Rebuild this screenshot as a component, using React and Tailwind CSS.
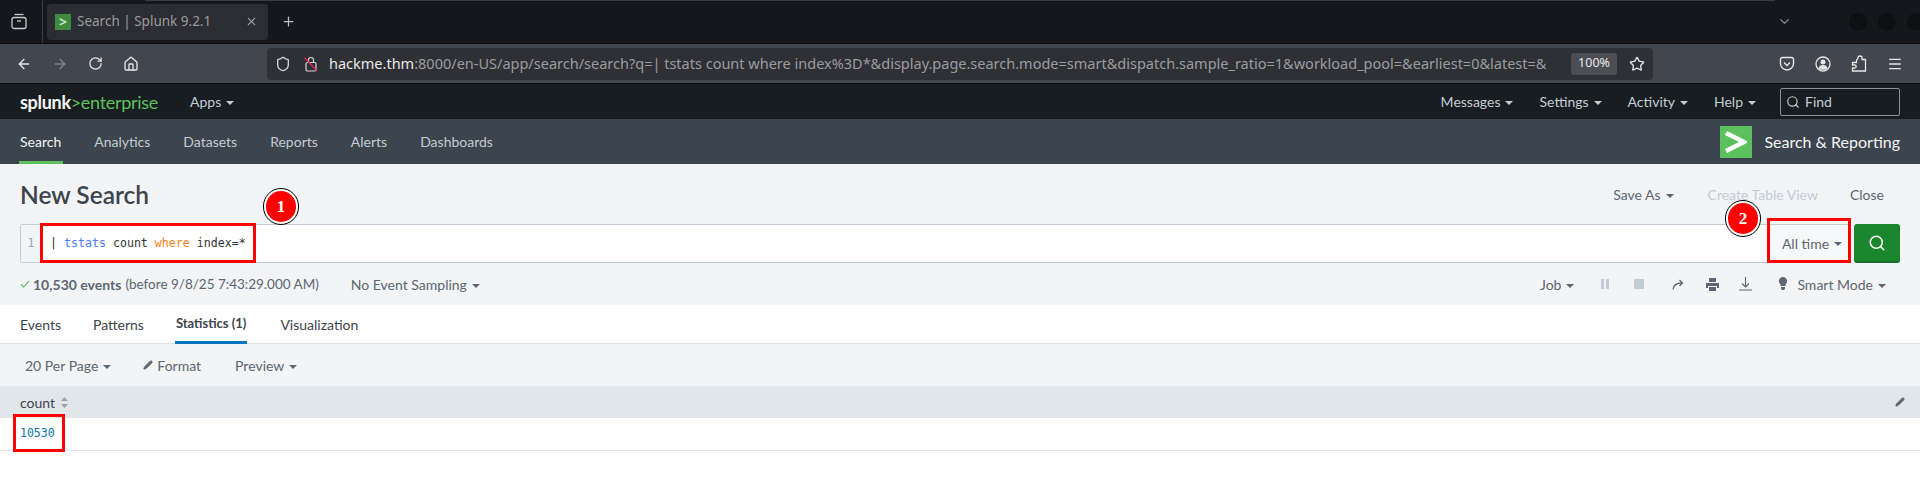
import React from "react";
import { ChevronDown, Pencil, Search, X, Plus, ArrowLeft, ArrowRight, RotateCw, House, Shield, Star, Menu } from "lucide-react";

const ui = "font-['Lato','Liberation_Sans',sans-serif]";
const chrome = "font-['Noto_Sans','Liberation_Sans',sans-serif]";
const mono = "font-['DejaVu_Sans_Mono',monospace]";

const Caret = () => (
  <span className="inline-block ml-[5px] w-0 h-0 border-x-[4px] border-x-transparent border-t-[4px] border-t-current align-middle" />
);

const NavItem = ({ label, active }) => (
  <div className={`h-full flex items-center relative ${active ? "text-[#f2f4f5]" : "text-[#c3cbd4]"}`}>
    {label}
    {active && <div className="absolute bottom-0 -left-[1px] -right-[2px] h-[3px] bg-[#5cc05c]" />}
  </div>
);

const TabBar = () => (
  <div className={`h-[44px] bg-[#15171c] flex items-center relative border-b border-[#0c0d10] ${chrome}`}>
    <div className="absolute top-0 left-[145px] w-[1630px] h-[1px] bg-[#3a3c41]" />
    <div className="w-[43px] h-full flex items-center justify-center pr-[4px] border-r border-[#3a3c41] shrink-0">
      <svg width="16" height="17" viewBox="0 0 16 17" fill="none" stroke="#c9cacc" strokeWidth="1.3">
        <path d="M3.500 1.500h9" />
        <rect x="1" y="4.500" width="14" height="11" rx="2" />
        <path d="M6 8h4" />
      </svg>
    </div>
    <div className="ml-[4px] w-[221px] h-[36px] bg-[#2b2d32] rounded-[4px] flex items-center pl-[8px] pr-[10px] text-[13.500px] text-[#9a9b9e] shrink-0">
      <div className="w-[16px] h-[16px] bg-[#3f8a3f] flex items-center justify-center text-[#c6e4c6] text-[14px] font-bold leading-none mr-[6px]">&gt;</div>
      <span className="flex-1">Search | Splunk 9.2.1</span>
      <X size={13} color="#9a9b9e" />
    </div>
    <Plus size={15} color="#bcbdc0" className="ml-[13px]" />
    <div className="flex-1" />
    <ChevronDown size={15} color="#8f9094" className="mr-[57px]" />
    <div className="flex gap-[11px] -mr-[5px]">
      <div className="w-[18px] h-[18px] rounded-full bg-[#0e0f12]" />
      <div className="w-[18px] h-[18px] rounded-full bg-[#0e0f12]" />
      <div className="w-[18px] h-[18px] rounded-full bg-[#0e0f12]" />
    </div>
  </div>
);

const UrlBar = () => (
  <div className={`h-[40px] bg-[#42464e] flex items-center border-b border-[#0c0d10] ${chrome}`}>
    <div className="w-[267px] flex items-center pl-[16px] gap-[20px] shrink-0">
      <ArrowLeft size={16} color="#e6e6e8" />
      <ArrowRight size={16} color="#83868c" />
      <RotateCw size={15} color="#e6e6e8" />
      <House size={16} color="#e6e6e8" />
    </div>
    <div className="w-[1386px] h-[32px] bg-[#2e3036] rounded-[4px] flex items-center pl-[8px] pr-[8px] text-[14.500px] shrink-0">
      <Shield size={16} color="#d5d5d7" />
      <svg width="14" height="16" viewBox="0 0 14 16" fill="none" stroke="#d5d5d7" strokeWidth="1.200" className="ml-[13px] mr-[11px]">
        <rect x="2" y="6.500" width="10" height="8.500" rx="1.500" />
        <path d="M4.500 6.500V4a2.500 2.500 0 0 1 5 0v2.500" />
        <path d="M0.500 1.500 13 15" stroke="#e22850" />
      </svg>
      <div className="w-[1232px] whitespace-nowrap overflow-hidden text-[#9b9c9f]">
        <span className="text-[#e8e8ea]">hackme.thm</span>:8000/en-US/app/search/search?q=| tstats count where index%3D*&amp;display.page.search.mode=smart&amp;dispatch.sample_ratio=1&amp;workload_pool=&amp;earliest=0&amp;latest=&amp;
      </div>
      <div className="w-[46px] h-[22px] bg-[#4c4e54] rounded-[3px] flex items-center justify-center text-[12.500px] text-[#e8e8ea] ml-[10px] shrink-0">100%</div>
      <Star size={16} color="#e6e6e8" className="ml-[12px]" />
    </div>
    <div className="flex-1 flex items-center justify-end pr-[17px] gap-[20px]">
      <svg width="16" height="16" viewBox="0 0 16 16" fill="none" stroke="#e6e6e8" strokeWidth="1.400">
        <path d="M1.500 3.500C1.500 2.400 2.400 1.500 3.500 1.500h9c1.100 0 2 .9 2 2V7.500a6.500 6.500 0 0 1-13 0z" />
        <path d="M5 6.500 8 9.500l3-3" />
      </svg>
      <svg width="16" height="16" viewBox="0 0 16 16" fill="none" stroke="#e6e6e8" strokeWidth="1.300">
        <circle cx="8" cy="8" r="7" />
        <circle cx="8" cy="6" r="2.500" fill="#e6e6e8" stroke="none" />
        <path d="M3.500 12.500c.5-2.500 2-3.500 4.500-3.500s4 1 4.500 3.500C11 14.300 5 14.300 3.500 12.500z" fill="#e6e6e8" stroke="none" />
      </svg>
      <svg width="16" height="17" viewBox="0 0 16 17" fill="none" stroke="#e6e6e8" strokeWidth="1.300">
        <path d="M1.500 7.500h4V5.500C5.500 4.500 7 3.900 7 2.700 7 1.800 7.800 1 9 1c1.200 0 2 .8 2 1.700v1.800h3.500v11.500H1.500v-3h2c1 0 1.700-.7 1.700-1.500S4.500 10 3.500 10h-2z" />
      </svg>
      <Menu size={16} color="#e6e6e8" />
    </div>
  </div>
);

const SplunkBar = () => (
  <div className={`h-[35px] bg-[#171d21] flex items-center pl-[20px] pr-[20px] text-[14px] text-[#c3cbd4] ${ui}`}>
    <div className="text-[18px] tracking-[-0.3px] leading-none w-[170px] shrink-0">
      <span className="text-[#f5f5f5] font-bold">splunk</span>
      <span className="text-[#5cc05c]">&gt;enterprise</span>
    </div>
    <div>Apps<Caret /></div>
    <div className="flex-1" />
    <div className="flex items-center gap-[26px]">
      <div>Messages<Caret /></div>
      <div>Settings<Caret /></div>
      <div>Activity<Caret /></div>
      <div>Help<Caret /></div>
    </div>
    <div className="ml-[24px] w-[120px] h-[28px] border border-[#8a939c] rounded-[2px] flex items-center pl-[5px] gap-[5px]">
      <Search size={14} color="#c3cbd4" />
      Find
    </div>
  </div>
);

const AppNav = () => (
  <div className={`h-[45px] bg-[#3c444d] flex items-center pl-[20px] pr-[20px] text-[14px] ${ui}`}>
    <div className="h-full flex gap-[33px]">
      <NavItem label="Search" active />
      <NavItem label="Analytics" />
      <NavItem label="Datasets" />
      <NavItem label="Reports" />
      <NavItem label="Alerts" />
      <NavItem label="Dashboards" />
    </div>
    <div className="flex-1" />
    <div className="w-[32px] h-[32px] bg-[#5cc05c] flex items-center justify-center mr-[12px]">
      <svg width="22" height="24" viewBox="0 0 22 24" fill="none" stroke="#ffffff" strokeWidth="4.500">
        <path d="M1 3 19 12 1 21" />
      </svg>
    </div>
    <div className="text-[16px] text-[#f2f4f5]">Search &amp; Reporting</div>
  </div>
);

const SearchPanel = () => (
  <div className={`h-[141px] bg-[#f2f4f5] px-[20px] text-[14px] ${ui}`}>
    <div className="h-[60px] flex items-center">
      <div className="text-[24.500px] font-semibold text-[#3c444d] pt-[2px]">New Search</div>
      <div className="flex-1" />
      <div className="text-[#5c6773]">Save As<Caret /></div>
      <div className="text-[#c3cbd4] ml-[34px]">Create Table View</div>
      <div className="text-[#5c6773] ml-[32px] mr-[16px]">Close</div>
    </div>
    <div className="h-[39px] flex">
      <div className="flex-1 flex border border-[#c3cbd4] border-r-0 rounded-l-[3px] bg-white">
        <div className={`w-[20px] bg-[#f2f4f5] text-[11.500px] text-[#9aa4ae] flex items-center justify-center ${mono}`}>1</div>
        <div className={`pl-[9px] flex items-center text-[11.620px] text-[#333] whitespace-pre ${mono}`}>
          | <span className="text-[#4a7dff]">tstats</span> count <span className="text-[#f58220]">where</span> index=*
        </div>
      </div>
      <div className="w-[81px] bg-[#f7f8fa] border-y border-[#c3cbd4] flex items-center justify-center pl-[3px] text-[#5c6773]">All time<Caret /></div>
      <div className="w-[46px] ml-[3px] bg-[#1a872e] border-b-[2px] border-[#15702a] rounded-[3px] flex items-center justify-center">
        <Search size={18} color="#ffffff" />
      </div>
    </div>
    <div className="h-[42px] flex items-center text-[#5c6773]">
      <svg width="10" height="10" viewBox="0 0 11 10" fill="none" stroke="#5cc05c" strokeWidth="1.200"><path d="M1 5.500 4 8.500 10 1.500" /></svg>
      <span className="font-bold ml-[3px]">10,530 events</span>
      <span className="ml-[4px] text-[13.500px]">(before 9/8/25 7:43:29.000 AM)</span>
      <span className="ml-[32px]">No Event Sampling<Caret /></span>
      <div className="flex-1" />
      <span>Job<Caret /></span>
      <svg width="10" height="10" viewBox="0 0 10 10" fill="#c3cbd4" className="ml-[26px]"><path d="M1 0h3v10H1zM6 0h3v10H6z" /></svg>
      <svg width="10" height="10" viewBox="0 0 10 10" fill="#c3cbd4" className="ml-[24px]"><path d="M0 0h10v10H0z" /></svg>
      <svg width="12" height="11" viewBox="0 0 12 11" fill="none" stroke="#5c6773" strokeWidth="1.300" className="ml-[28px]">
        <path d="M1 10.500C1.500 6 4.500 4 10 4" />
        <path d="M7.500 1 10.500 4 7.500 7" />
      </svg>
      <svg width="13" height="13" viewBox="0 0 13 13" fill="#5c6773" className="ml-[22px]">
        <path d="M3 0h7v4H3zM0 5h13v5h-2V8H2v2H0zM3 9h7v4H3z" />
      </svg>
      <svg width="13" height="14" viewBox="0 0 13 14" fill="none" stroke="#5c6773" strokeWidth="1.100" className="ml-[20px]">
        <path d="M6.500 0v10M3 6.500 6.500 10 10 6.500M0 13h13" />
      </svg>
      <svg width="10" height="14" viewBox="0 0 10 14" fill="#5c6773" className="ml-[26px]">
        <path d="M5 0a4 4 0 0 1 2.500 7.200V9h-5V7.200A4 4 0 0 1 5 0zM3 10h4v1.500L6 13H4l-1-1.500z" />
      </svg>
      <span className="ml-[9px] mr-[14px]">Smart Mode<Caret /></span>
    </div>
  </div>
);

const ResultsTabs = () => (
  <div className={`h-[39px] bg-white border-b border-[#dfe3e7] flex px-[20px] gap-[32px] text-[14px] text-[#3c444d] ${ui}`}>
    <div className="flex items-center">Events</div>
    <div className="flex items-center">Patterns</div>
    <div className="flex items-center font-bold text-[13px] relative">
      Statistics (1)
      <div className="absolute -bottom-[1px] -left-[1px] -right-[1px] h-[3px] bg-[#0877c0]" />
    </div>
    <div className="flex items-center ml-[2px]">Visualization</div>
  </div>
);

const ResultsTable = () => (
  <div className={`text-[14px] ${ui}`}>
    <div className="h-[42px] bg-[#f2f4f5] flex items-center pl-[25px] text-[#5c6773]">
      <div>20 Per Page<Caret /></div>
      <div className="flex items-center ml-[32px]"><Pencil size={10} fill="#5c6773" className="mr-[4px]" />Format</div>
      <div className="ml-[34px]">Preview<Caret /></div>
    </div>
    <div className="h-[32px] bg-[#e1e6eb] flex items-center pl-[20px] pr-[15px] text-[#3c444d]">
      count
      <svg width="7" height="11" viewBox="0 0 7 11" fill="#9aa4ae" className="ml-[6px]"><path d="M3.500 0 7 4H0zM0 7h7l-3.500 4z" /></svg>
      <div className="flex-1" />
      <Pencil size={10} color="#5c6773" fill="#5c6773" />
    </div>
    <div className={`h-[33px] bg-white border-b border-[#e1e6eb] flex items-center pl-[20px] text-[11.500px] text-[#0877a6] ${mono}`}>10530</div>
  </div>
);

// red callouts drawn over the screenshot
const Callouts = () => {
  const badge = "absolute w-[34px] h-[35px] rounded-full bg-[#ff0000] border-[2px] border-white outline outline-1 outline-black flex items-center justify-center text-white text-[17px] font-bold font-['Liberation_Serif',serif]";
  return (
    <>
      <div className="absolute left-[40px] top-[223px] w-[216px] h-[40px] border-[3px] border-[#ff0000]" />
      <div className="absolute left-[1767px] top-[218px] w-[84px] h-[45px] border-[3px] border-[#ff0000]" />
      <div className="absolute left-[13px] top-[414px] w-[52px] h-[38px] border-[3px] border-[#ff0000]" />
      <div className={`${badge} left-[264px] top-[189px]`}>1</div>
      <div className={`${badge} left-[1726px] top-[201px]`}>2</div>
    </>
  );
};

export default function App() {
  return (
    <div className="relative w-[1920px] h-[484px] bg-white overflow-hidden">
      <TabBar />
      <UrlBar />
      <SplunkBar />
      <AppNav />
      <SearchPanel />
      <ResultsTabs />
      <ResultsTable />
      <Callouts />
    </div>
  );
}
